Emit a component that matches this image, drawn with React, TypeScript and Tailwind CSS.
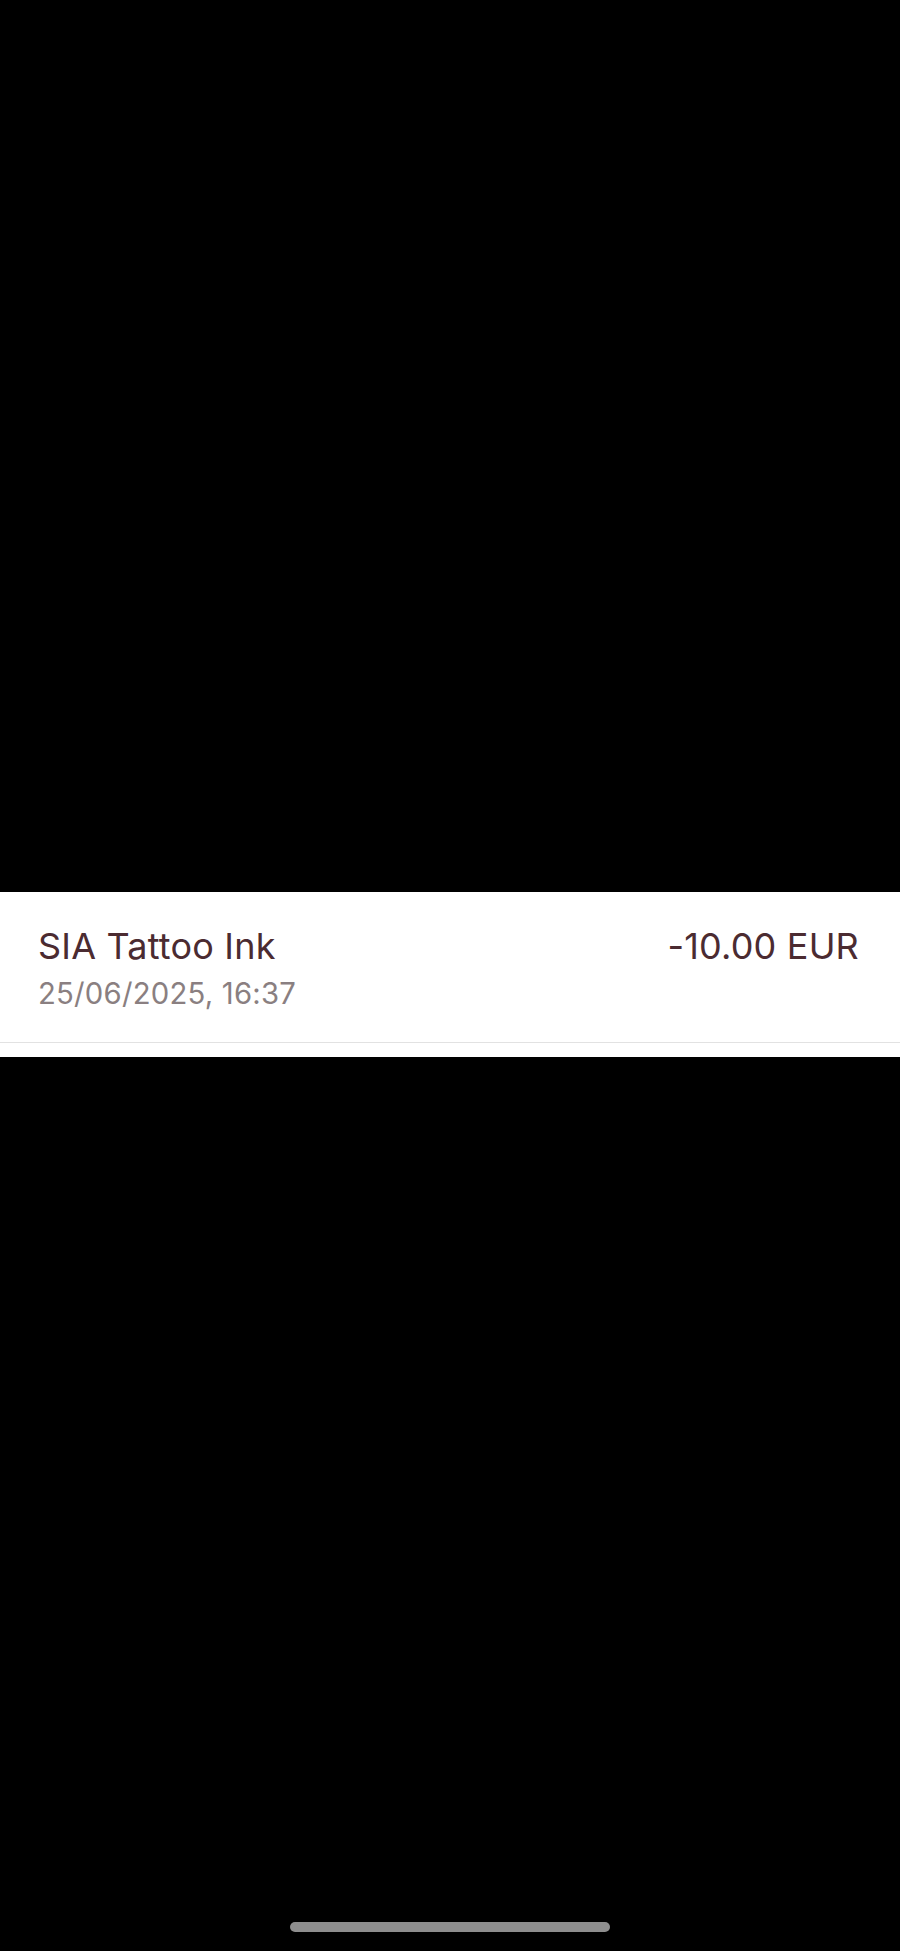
export default function App() {
    return (
        <div
            className="w-[900px] h-[1951px] bg-black flex flex-col"
            style={{ fontFamily: 'Inter, "Noto Sans", sans-serif' }}
        >
            <div className="h-[892px] shrink-0" />

            <div className="h-[165px] shrink-0 bg-white flex flex-col">
                <div className="flex justify-between items-start pl-[38px] pr-[41px] pt-[33px] h-[150px]">
                    <div className="flex flex-col">
                        <span className="text-[36px] leading-[42px] text-[#4b2b31] tracking-[0.2px]">SIA Tattoo Ink</span>
                        <span className="text-[29.3px] leading-[34px] mt-[10px] text-[#8a7f81] tracking-[0.2px]">25/06/2025, 16:37</span>
                    </div>
                    <span className="text-[36px] leading-[42px] text-[#4b2b31] tracking-[0.2px]">-10.00 EUR</span>
                </div>
                <div className="h-px bg-[#e2e2e2]" />
            </div>

            <div className="flex-1 flex flex-col justify-end items-center pb-[19px]">
                <div className="w-[320px] h-[10px] rounded-full bg-[#8e8e8e]" />
            </div>
        </div>
    )
}
